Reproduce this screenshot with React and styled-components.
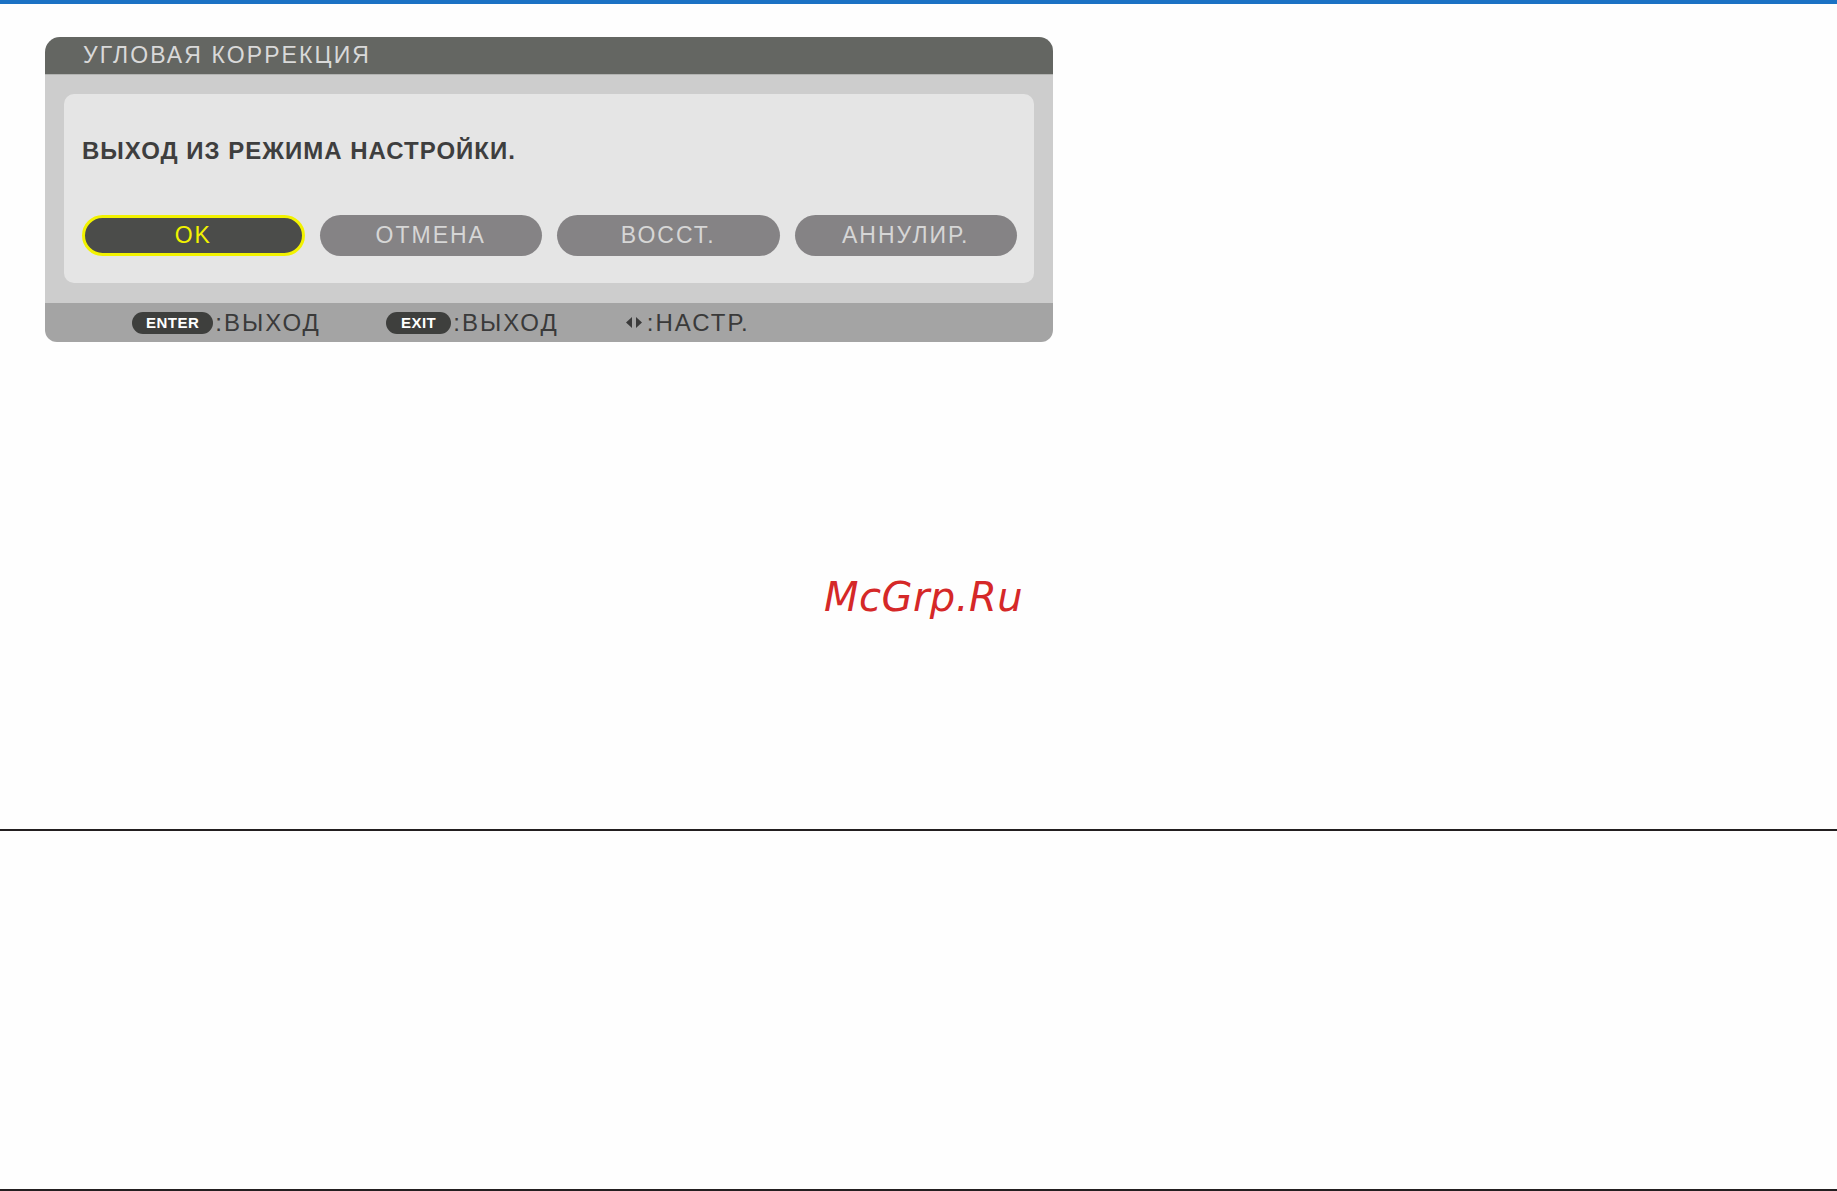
import React from "react";
import styled, { createGlobalStyle } from "styled-components";

const GlobalStyle = createGlobalStyle`
  html, body {
    margin: 0;
    padding: 0;
    background: #ffffff;
    overflow: hidden;
  }
  body {
    font-family: "Liberation Sans", Arial, sans-serif;
  }
`;

const Page = styled.div`
  width: 1837px;
  height: 1191px;
  display: flex;
  flex-direction: column;
  background: #fefefe;
`;

const TopBar = styled.div`
  height: 4px;
  background: #1b72c4;
`;

const Dialog = styled.section`
  margin: 33px 0 0 45px;
  width: 1008px;
  border-radius: 15px 14px 12px 12px;
  overflow: hidden;
  display: flex;
  flex-direction: column;
  font-family: "Liberation Sans", Arial, sans-serif;
`;

const TitleBar = styled.header`
  height: 37px;
  display: flex;
  align-items: center;
  padding-left: 38px;
  background: #646662;
  border-bottom: 1px solid #b2b3b1;
  color: #d9d9d9;
  font-size: 23px;
  letter-spacing: 2.1px;
`;

const Body = styled.div`
  background: #cdcdcd;
  padding: 19px 19px 20px 19px;
`;

const Panel = styled.div`
  height: 189px;
  box-sizing: border-box;
  background: #e5e5e5;
  border-radius: 10px;
  padding: 43px 17px 0 18px;
  display: flex;
  flex-direction: column;
`;

const Message = styled.div`
  height: 28px;
  line-height: 28px;
  font-size: 24px;
  font-weight: bold;
  letter-spacing: 1px;
  color: #3e3e3e;
`;

const ButtonRow = styled.div`
  margin-top: 50px;
  display: grid;
  grid-template-columns: repeat(4, 1fr);
  gap: 15px;
`;

const Button = styled.button`
  height: 41px;
  box-sizing: border-box;
  border-radius: 21px;
  border: ${(p) => (p.$active ? "3px solid #f2f200" : "none")};
  background: ${(p) => (p.$active ? "#4b4c4a" : "#858385")};
  color: ${(p) => (p.$active ? "#f2f200" : "#d6d6d6")};
  font-family: "Liberation Sans", Arial, sans-serif;
  font-size: 23px;
  letter-spacing: 2px;
  padding: 0;
  display: flex;
  align-items: center;
  justify-content: center;
`;

const Footer = styled.footer`
  height: 39px;
  background: #a4a4a4;
  display: flex;
  align-items: center;
  padding-left: 87px;
  gap: 65px;
`;

const Hint = styled.div`
  display: flex;
  align-items: center;
`;

const Key = styled.span`
  height: 22px;
  padding: 0 ${(p) => p.$pad || 14}px;
  border-radius: 11px;
  background: #3e3f3d;
  color: #ffffff;
  font-size: 15px;
  font-weight: bold;
  letter-spacing: 0.5px;
  display: flex;
  align-items: center;
  margin-right: 2px;
`;

const HintText = styled.span`
  font-size: 24px;
  letter-spacing: 2px;
  color: #3a3a3a;
`;

const Watermark = styled.div`
  margin-top: 231px;
  height: 48px;
  line-height: 48px;
  text-align: center;
  padding-left: 10px;
  font-family: "DejaVu Sans", sans-serif;
  font-style: oblique;
  font-size: 40px;
  letter-spacing: 0.5px;
  color: #d52828;
`;

const Rule = styled.div`
  margin-top: ${(p) => p.$gap}px;
  height: 2px;
  background: #231f20;
`;

// Left/right adjust glyph used in the footer hint
const ArrowsIcon = () => (
  <svg width="20" height="11" viewBox="0 0 20 11" style={{ marginRight: 3 }}>
    <polygon points="8,0 8,11 2,5.5" fill="#3a3a3a" />
    <polygon points="12,0 12,11 18,5.5" fill="#3a3a3a" />
  </svg>
);

export default function App() {
  return (
    <>
      <GlobalStyle />
      <Page>
        <TopBar />
        <Dialog>
          <TitleBar>УГЛОВАЯ КОРРЕКЦИЯ</TitleBar>
          <Body>
            <Panel>
              <Message>ВЫХОД ИЗ РЕЖИМА НАСТРОЙКИ.</Message>
              <ButtonRow>
                <Button $active>OK</Button>
                <Button>ОТМЕНА</Button>
                <Button>ВОССТ.</Button>
                <Button>АННУЛИР.</Button>
              </ButtonRow>
            </Panel>
          </Body>
          <Footer>
            <Hint>
              <Key>ENTER</Key>
              <HintText>:ВЫХОД</HintText>
            </Hint>
            <Hint>
              <Key $pad={15}>EXIT</Key>
              <HintText>:ВЫХОД</HintText>
            </Hint>
            <Hint>
              <ArrowsIcon />
              <HintText>:НАСТР.</HintText>
            </Hint>
          </Footer>
        </Dialog>
        <Watermark>McGrp.Ru</Watermark>
        <Rule $gap={208} />
        <Rule $gap={358} />
      </Page>
    </>
  );
}
